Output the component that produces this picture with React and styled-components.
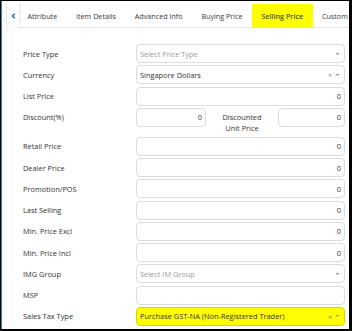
import React from "react";
import styled, { createGlobalStyle } from "styled-components";

const Global = createGlobalStyle`
  html, body { margin: 0; padding: 0; background: #fff; }
  * { box-sizing: border-box; }
  body { font-family: "Open Sans", "Noto Sans", Arial, sans-serif; }
`;

const Frame = styled.div`
  width: 352px;
  height: 331px;
  border-style: solid;
  border-color: #000;
  border-width: 1px 3px 2px 1px;
  overflow: hidden;
  background: #fff;
`;

const Inner = styled.div`
  height: 100%;
  border-left: 1px solid #2a8c9c;
  display: flex;
  flex-direction: column;
`;

const TabBar = styled.div`
  display: flex;
  align-items: stretch;
  height: 27px;
  padding: 3px 0 0 4px;
  white-space: nowrap;
  overflow: hidden;
`;

const Chevron = styled.div`
  width: 14px;
  flex: none;
  display: flex;
  align-items: center;
  justify-content: center;
  border-left: 1px dotted #d8d8d8;
  border-right: 1px dotted #d8d8d8;
  margin-right: -2px;
  background: #fff;
`;

const TabList = styled.div`
  display: flex;
  flex: 1;
  min-width: 0;
  overflow: hidden;
  border-bottom: 1px solid #e4e4e4;
`;

const Tab = styled.div`
  flex: none;
  padding: 0 9.4px;
  display: flex;
  align-items: center;
  font-size: 7.2px;
  color: ${(p) => (p.$active ? "#4a5a16" : "#3a3a3a")};
  background: ${(p) => (p.$active ? "#ffff00" : "transparent")};
  font-weight: ${(p) => (p.$active ? 600 : 400)};
`;

const Form = styled.div`
  display: grid;
  grid-template-columns: 113px 209px;
  row-gap: 2.25px;
  padding: 16px 0 0 21px;
  align-items: start;
`;

const Label = styled.div`
  font-size: 7.4px;
  color: #333;
  height: 19px;
  display: flex;
  align-items: center;
`;

const Field = styled.div`
  height: 19px;
  border: 1px solid ${(p) => (p.$hl ? "#d6d600" : "#dcdcdc")};
  border-radius: 4px;
  background: ${(p) => (p.$hl ? "#ffff00" : "#fff")};
  display: flex;
  align-items: center;
  padding: 0 3px 0 3px;
  font-size: 7.4px;
  color: ${(p) => (p.$placeholder ? "#9a9a9a" : "#333")};
  justify-content: ${(p) => (p.$num ? "flex-end" : "flex-start")};
  min-width: 0;
`;

const FieldText = styled.span`
  flex: 1;
  white-space: nowrap;
  overflow: hidden;
`;

const Icons = styled.span`
  display: flex;
  align-items: center;
  gap: 3px;
  margin-left: auto;
  padding-right: 1px;
  color: #999;
`;

const Clear = styled.span`
  font-size: 7px;
  color: #8a8a8a;
  line-height: 1;
  margin-top: 2px;
`;

const DiscountRow = styled.div`
  display: grid;
  grid-template-columns: 70px 1fr 67px;
  align-items: start;
  height: 26.75px;
`;

const MidLabel = styled.div`
  font-size: 7.4px;
  color: #333;
  text-align: center;
  line-height: 11px;
  padding-top: 4px;
`;

const Arrow = () => (
  <svg width="5" height="4" viewBox="0 0 5 4">
    <path d="M0.5 1 L4.5 1 L2.5 3 Z" fill="#9a9a9a" />
  </svg>
);

const tabs = ["Attribute", "Item Details", "Advanced Info", "Buying Price", "Selling Price", "Custom Columns"];

const NumField = ({ v = "0" }) => <Field $num>{v}</Field>;

const SelectField = ({ text, placeholder, clear, hl }) => (
  <Field $placeholder={placeholder} $hl={hl}>
    <FieldText>{text}</FieldText>
    <Icons>
      {clear && <Clear>×</Clear>}
      <Arrow />
    </Icons>
  </Field>
);

export default function App() {
  return (
    <>
      <Global />
      <Frame>
        <Inner>
          <TabBar>
            <Chevron>
              <svg width="5" height="6" viewBox="0 0 5 6">
                <path d="M3.8 0.8 L1.3 3 L3.8 5.2" stroke="#1a6fd6" strokeWidth="1.5" fill="none" />
              </svg>
            </Chevron>
            <TabList>
              {tabs.map((t) => (
                <Tab key={t} $active={t === "Selling Price"}>{t}</Tab>
              ))}
            </TabList>
          </TabBar>
          <Form>
            <Label>Price Type</Label>
            <SelectField text="Select Price Type" placeholder />
            <Label>Currency</Label>
            <SelectField text="Singapore Dollars" clear />
            <Label>List Price</Label>
            <NumField />
            <Label>Discount(%)</Label>
            <DiscountRow>
              <NumField />
              <MidLabel>Discounted<br />Unit Price</MidLabel>
              <NumField />
            </DiscountRow>
            <Label>Retail Price</Label>
            <NumField />
            <Label>Dealer Price</Label>
            <NumField />
            <Label>Promotion/POS</Label>
            <NumField />
            <Label>Last Selling</Label>
            <NumField />
            <Label>Min. Price Excl</Label>
            <NumField />
            <Label>Min. Price Incl</Label>
            <NumField />
            <Label>IMG Group</Label>
            <SelectField text="Select IM Group" placeholder />
            <Label>MSP</Label>
            <Field />
            <Label>Sales Tax Type</Label>
            <SelectField text="Purchase GST-NA (Non-Registered Trader)" clear hl />
          </Form>
        </Inner>
      </Frame>
    </>
  );
}
